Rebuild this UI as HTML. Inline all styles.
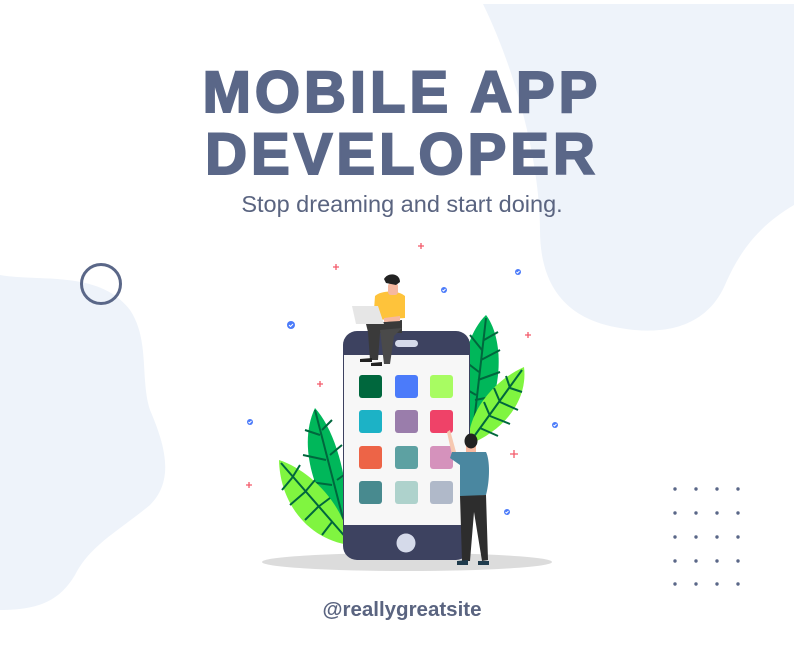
<!DOCTYPE html>
<html><head><meta charset="utf-8"><style>
html,body{margin:0;padding:0}
body{width:794px;height:653px;position:relative;overflow:hidden;background:#fff;font-family:"Liberation Sans",sans-serif}
svg{position:absolute;left:0;top:0}
.t{position:absolute;left:5px;width:794px;text-align:center;color:#5a6788;font-weight:bold}
</style></head><body>
<svg width="794" height="653" viewBox="0 0 794 653">
<path d="M483,4 L794,4 L794,205 C760,225 740,250 725,285 C705,330 660,335 620,328 C570,320 540,290 540,230 C540,170 520,80 483,4 Z" fill="#eef3fa"/>
<path d="M0,275 C40,282 100,270 130,310 C150,340 140,380 150,410 C165,445 175,480 150,505 C120,530 90,545 75,575 C60,600 40,610 0,610 Z" fill="#eef3fa"/>
<circle cx="101" cy="284" r="19.5" fill="none" stroke="#5a6788" stroke-width="3"/>
<g fill="#5a6788">
<circle cx="675" cy="489" r="1.7"/><circle cx="696" cy="489" r="1.7"/><circle cx="717" cy="489" r="1.7"/><circle cx="738" cy="489" r="1.7"/>
<circle cx="675" cy="513" r="1.7"/><circle cx="696" cy="513" r="1.7"/><circle cx="717" cy="513" r="1.7"/><circle cx="738" cy="513" r="1.7"/>
<circle cx="675" cy="537" r="1.7"/><circle cx="696" cy="537" r="1.7"/><circle cx="717" cy="537" r="1.7"/><circle cx="738" cy="537" r="1.7"/>
<circle cx="675" cy="561" r="1.7"/><circle cx="696" cy="561" r="1.7"/><circle cx="717" cy="561" r="1.7"/><circle cx="738" cy="561" r="1.7"/>
<circle cx="675" cy="584" r="1.7"/><circle cx="696" cy="584" r="1.7"/><circle cx="717" cy="584" r="1.7"/><circle cx="738" cy="584" r="1.7"/>
</g>
<ellipse cx="407" cy="562" rx="145" ry="9" fill="#dcdcdc"/>
<path d="M486,315 C505,340 505,400 470,445 C455,400 460,340 486,315 Z" fill="#00b75a"/>
<path d="M486,318 L472,440 M484,340 L498,332 M481,360 L500,350 M478,380 L500,372 M475,400 L496,396 M482,350 L470,335 M479,372 L466,362 M476,395 L464,388" stroke="#00673d" stroke-width="2" fill="none"/>
<path d="M524,367 C528,400 505,430 468,445 C468,410 495,380 524,367 Z" fill="#80f540"/>
<path d="M522,370 L470,442 M510,388 L522,392 M500,402 L518,410 M490,416 L510,424 M480,428 L498,436 M510,388 L506,376 M500,402 L494,388 M490,416 L484,402" stroke="#00673d" stroke-width="2" fill="none"/>
<path d="M315,408 C335,430 350,480 348,535 C320,510 295,450 315,408 Z" fill="#00b75a"/>
<path d="M315,410 L346,530 M320,435 L305,430 M326,460 L303,455 M332,485 L310,482 M322,430 L332,420 M330,455 L342,445 M337,480 L348,472" stroke="#00673d" stroke-width="2" fill="none"/>
<path d="M279,460 C310,470 345,505 350,545 C310,540 280,505 279,460 Z" fill="#80f540"/>
<path d="M281,463 L348,540 M292,478 L282,490 M305,492 L290,505 M318,507 L305,520 M332,522 L322,535 M292,478 L300,465 M305,492 L315,480 M318,507 L330,498" stroke="#00673d" stroke-width="2" fill="none"/>
<rect x="343" y="331" width="127" height="229" rx="14" fill="#3d4260"/>
<rect x="344" y="355" width="125" height="170" fill="#f7f7f7"/>
<rect x="395" y="340" width="23" height="7" rx="3.5" fill="#d5daea"/>
<circle cx="406" cy="543" r="9.5" fill="#d5daea"/>
<g>
<rect x="359" y="375" width="23" height="23" rx="3" fill="#00673d"/><rect x="395" y="375" width="23" height="23" rx="3" fill="#4b7bfa"/><rect x="430" y="375" width="23" height="23" rx="3" fill="#a8fc62"/>
<rect x="359" y="410" width="23" height="23" rx="3" fill="#1cb2c6"/><rect x="395" y="410" width="23" height="23" rx="3" fill="#9a7dab"/><rect x="430" y="410" width="23" height="23" rx="3" fill="#ef4268"/>
<rect x="359" y="446" width="23" height="23" rx="3" fill="#ed6447"/><rect x="395" y="446" width="23" height="23" rx="3" fill="#5da1a2"/><rect x="430" y="446" width="23" height="23" rx="3" fill="#d592bc"/>
<rect x="359" y="481" width="23" height="23" rx="3" fill="#488a8f"/><rect x="395" y="481" width="23" height="23" rx="3" fill="#aed2cc"/><rect x="430" y="481" width="23" height="23" rx="3" fill="#b0b9c9"/>
</g>
<path d="M366,324 L402,320 L402,333 L380,333 L378,360 L370,360 L368,332 Z" fill="#3a3a3a"/>
<path d="M380,330 L402,328 L394,336 L390,364 L384,364 Z" fill="#4a4a4a"/>
<path d="M360,359 L372,358 L372,362 L360,362 Z M371,363 L382,362 L382,366 L371,366Z" fill="#222"/>
<path d="M375,296 C382,290 398,290 405,296 L405,318 L378,320 L374,310 Z" fill="#fec33b"/>
<rect x="388" y="283" width="10" height="12" rx="3" fill="#f6b8a0"/>
<path d="M384,279 C388,272 400,273 400,282 L396,285 L386,283 Z" fill="#222"/>
<path d="M352,306 L378,306 L384,324 L356,324 Z" fill="#e6e6e6"/>
<path d="M384,318 L400,316 L400,321 L384,322 Z" fill="#f6b8a0"/>
<path d="M447,432 L450,430 L456,452 L452,455 Z" fill="#f6c8b0"/>
<rect x="466" y="443" width="10" height="10" fill="#f6b8a0"/>
<ellipse cx="471" cy="441" rx="6.5" ry="7.5" fill="#222"/>
<path d="M452,452 L486,452 C490,460 490,480 486,495 L460,497 L460,465 L450,458 Z" fill="#4a87a0"/>
<path d="M460,496 L486,495 L488,560 L482,561 L474,512 L470,561 L462,561 Z" fill="#2d2d2d"/>
<path d="M457,561 L468,560 L468,565 L457,565 Z M478,561 L489,561 L489,565 L478,565 Z" fill="#1f3b4d"/>
<g stroke="#f35b6a" stroke-width="1.3">
<path d="M418,246h6M421,243v6"/><path d="M333,267h6M336,264v6"/><path d="M525,335h6M528,332v6"/><path d="M317,384h6M320,381v6"/><path d="M510,454h8M514,450v8"/><path d="M246,485h6M249,482v6"/>
</g>
<g fill="#4b7bfa">
<circle cx="518" cy="272" r="3"/><circle cx="444" cy="290" r="3"/><circle cx="291" cy="325" r="4"/><circle cx="250" cy="422" r="3"/><circle cx="555" cy="425" r="3"/><circle cx="507" cy="512" r="3"/>
</g>
<g stroke="#fff" stroke-width="1" fill="none">
<path d="M516.5,272l1,1l2,-2M442.5,290l1,1l2,-2M289,325l1.5,1.5l2.5,-2.5M248.5,422l1,1l2,-2M553.5,425l1,1l2,-2M505.5,512l1,1l2,-2"/>
</g>
</svg>
<div class="t" style="top:62px;font-size:58px;line-height:62px;letter-spacing:4px;-webkit-text-stroke:2px #5a6788">MOBILE APP<br>DEVELOPER</div>
<div class="t" style="top:191px;font-size:23.5px;font-weight:normal;color:#5a6480">Stop dreaming and start doing.</div>
<div class="t" style="top:598px;font-size:20.5px;color:#5a6480">@reallygreatsite</div>
</body></html>
